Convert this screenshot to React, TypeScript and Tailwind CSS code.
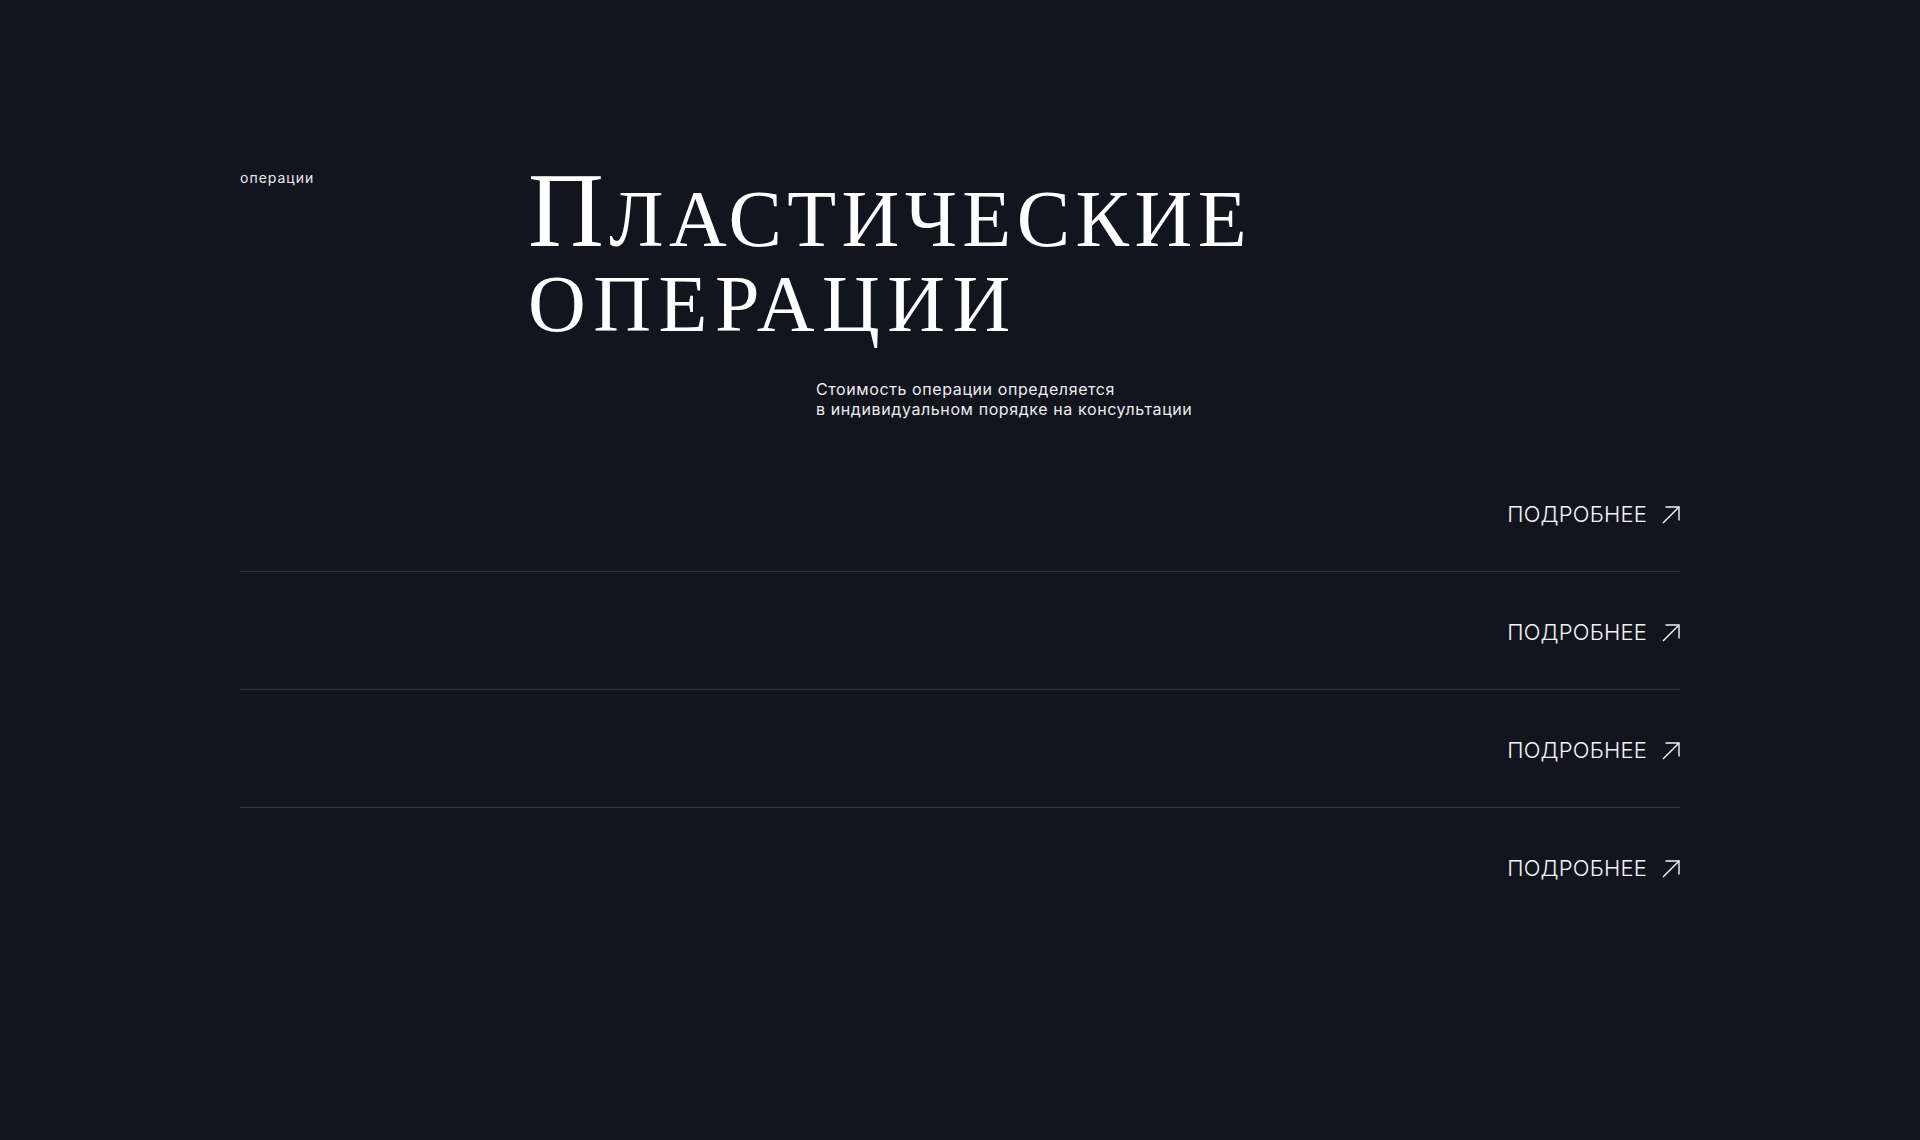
import React from "react";

const sans = "font-['Inter','Liberation_Sans',sans-serif]";

function ArrowIcon() {
  return (
    <svg width="18" height="18" viewBox="0 0 18 18" fill="none" className="shrink-0">
      <path d="M1 17L17 1" stroke="currentColor" strokeWidth="1.4" />
      <path d="M3.5 1H17V14.5" stroke="currentColor" strokeWidth="1.4" />
    </svg>
  );
}

function OperationRow({ last }: { last?: boolean }) {
  return (
    <li className={last ? "" : "border-b border-[#34363d]"}>
      <a
        href="#"
        className="flex h-[117px] items-center justify-end gap-[15px] pt-[4px] text-[#f4f4f5]"
      >
        <span className={`${sans} text-[22px] font-light uppercase tracking-[0.2px]`}>
          Подробнее
        </span>
        <ArrowIcon />
      </a>
    </li>
  );
}

export default function App() {
  return (
    <div className="min-h-[1140px] bg-[#13151e] text-white">
      <section className="mx-auto w-[1440px] pt-[168px]">
        <div className="grid grid-cols-5">
          <p className={`${sans} -mt-[1px] text-[14px] tracking-[1px] text-[#e8e8ea]`}>операции</p>
          <div className="col-span-4">
            <h2 className="font-['Liberation_Serif',serif] text-[80px] uppercase leading-[85px]">
              <span className="block tracking-[5.5px] first-letter:text-[105px]">Пластические</span>
              <span className="block tracking-[7.5px]">операции</span>
            </h2>
          </div>
        </div>
        <div className="mt-[32px] grid grid-cols-5">
          <p
            className={`${sans} col-span-3 col-start-3 text-[16px] leading-[20px] tracking-[0.6px] text-[#ececee]`}
          >
            Стоимость операции определяется
            <br />
            в индивидуальном порядке на консультации
          </p>
        </div>

        <ul className="mt-[35px]">
          <OperationRow />
          <OperationRow />
          <OperationRow />
          <OperationRow last />
        </ul>
      </section>
    </div>
  );
}
